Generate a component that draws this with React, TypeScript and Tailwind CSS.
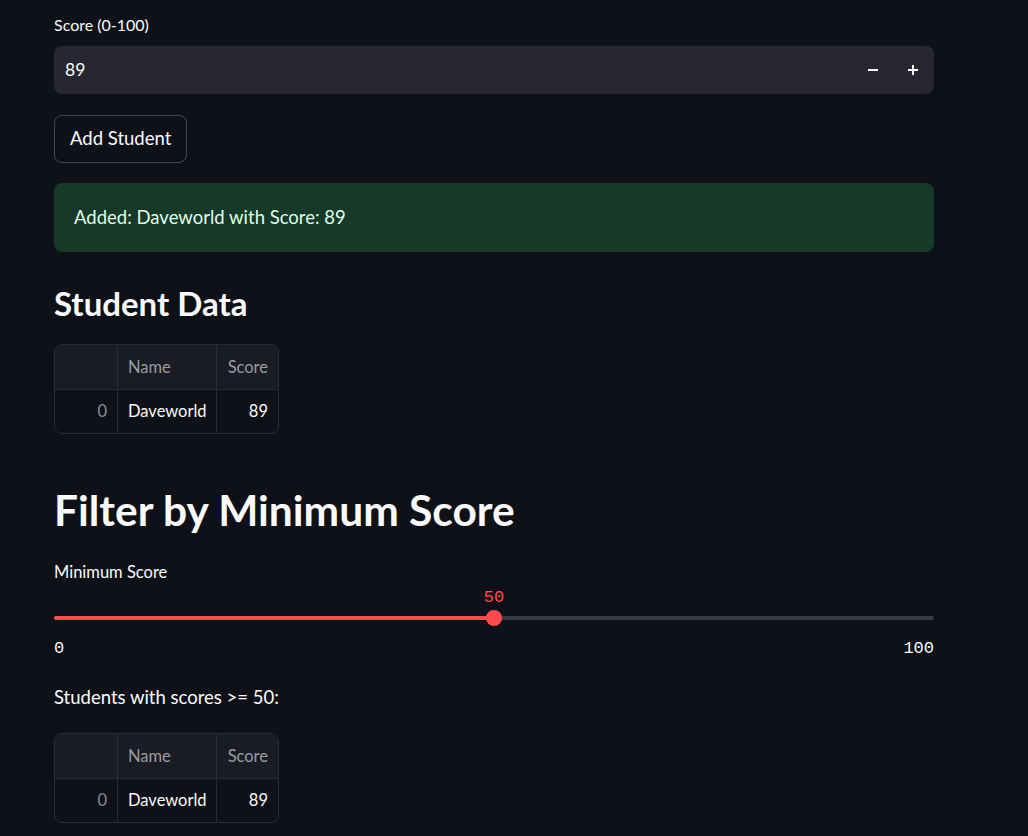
import React from "react";

const sans = { fontFamily: "'Source Sans Pro', Lato, 'Noto Sans', sans-serif" };
const mono = { fontFamily: "'Liberation Mono', 'DejaVu Sans Mono', monospace" };

function DataTable() {
  return (
    <div className="w-[225px] rounded-lg border border-[#2a2c34] overflow-hidden text-[16.5px]">
      <div className="flex h-[45px] bg-[#1a1c24] border-b border-[#2a2c34] text-[#9a9ba1]">
        <div className="w-[63px] border-r border-[#2a2c34]" />
        <div className="w-[99px] border-r border-[#2a2c34] flex items-center px-[10px]">Name</div>
        <div className="flex-1 flex items-center justify-end px-[10px]">Score</div>
      </div>
      <div className="flex h-[43px] text-[#fafafa]">
        <div className="w-[63px] border-r border-[#2a2c34] flex items-center justify-end px-[10px] text-[#8b8c92]">0</div>
        <div className="w-[99px] border-r border-[#2a2c34] flex items-center px-[10px]">Daveworld</div>
        <div className="flex-1 flex items-center justify-end px-[10px]">89</div>
      </div>
    </div>
  );
}

export default function App() {
  const value = 50;
  return (
    <div className="min-h-screen bg-[#0e1117] text-[#fafafa]" style={sans}>
      <div className="w-[880px] ml-[54px] pt-[13px] pb-10">
        {/* number input */}
        <label className="block text-[16px] leading-6 mb-[9px]">Score (0-100)</label>
        <div className="flex items-center h-[48px] rounded-lg bg-[#262730] pl-[11px] pr-[1px]">
          <span className="flex-1 text-[17.5px]">89</span>
          <button className="w-10 h-full flex items-center justify-center">
            <svg width="12" height="12" viewBox="0 0 12 12"><rect x="1" y="5" width="10" height="2" fill="#fafafa" /></svg>
          </button>
          <button className="w-10 h-full flex items-center justify-center">
            <svg width="12" height="12" viewBox="0 0 12 12"><rect x="1" y="5" width="10" height="2" fill="#fafafa" /><rect x="5" y="1" width="2" height="10" fill="#fafafa" /></svg>
          </button>
        </div>

        <button className="mt-[21px] h-[48px] px-[15px] rounded-lg border border-[#45474e] bg-[#0e1117] text-[18.5px]">
          Add Student
        </button>

        {/* success */}
        <div className="mt-[20px] h-[69px] rounded-lg bg-[#173928] flex items-center px-5 text-[18.5px] text-[#dffde9]">
          Added: Daveworld with Score: 89
        </div>

        <h3 className="mt-[31px] text-[33px] leading-10 font-bold">Student Data</h3>
        <div className="mt-[21px]">
          <DataTable />
        </div>

        <h1 className="mt-[50px] text-[42.5px] leading-[52px] font-bold">Filter by Minimum Score</h1>

        {/* slider */}
        <label className="block mt-[24px] text-[16.5px] leading-6">Minimum Score</label>
        <div className="relative mt-[2px] h-[51px]">
          <div
            className="absolute -translate-x-1/2 top-0 text-[17px] leading-6 text-[#ff4b4b]"
            style={{ left: `${value}%`, ...mono }}
          >
            {value}
          </div>
          <div className="absolute left-0 right-0 top-[30px] h-1 rounded-full bg-[#383a42]" />
          <div className="absolute left-0 top-[30px] h-1 rounded-full bg-[#ff4b4b]" style={{ width: `${value}%` }} />
          <div
            className="absolute top-[24px] w-4 h-4 -translate-x-1/2 rounded-full bg-[#ff4b4b]"
            style={{ left: `${value}%` }}
          />
        </div>
        <div className="flex justify-between text-[17px] leading-6" style={mono}>
          <span>0</span>
          <span>100</span>
        </div>

        <p className="mt-[22px] text-[18.5px] leading-7">Students with scores &gt;= 50:</p>
        <div className="mt-[22px]">
          <DataTable />
        </div>
      </div>
    </div>
  );
}
